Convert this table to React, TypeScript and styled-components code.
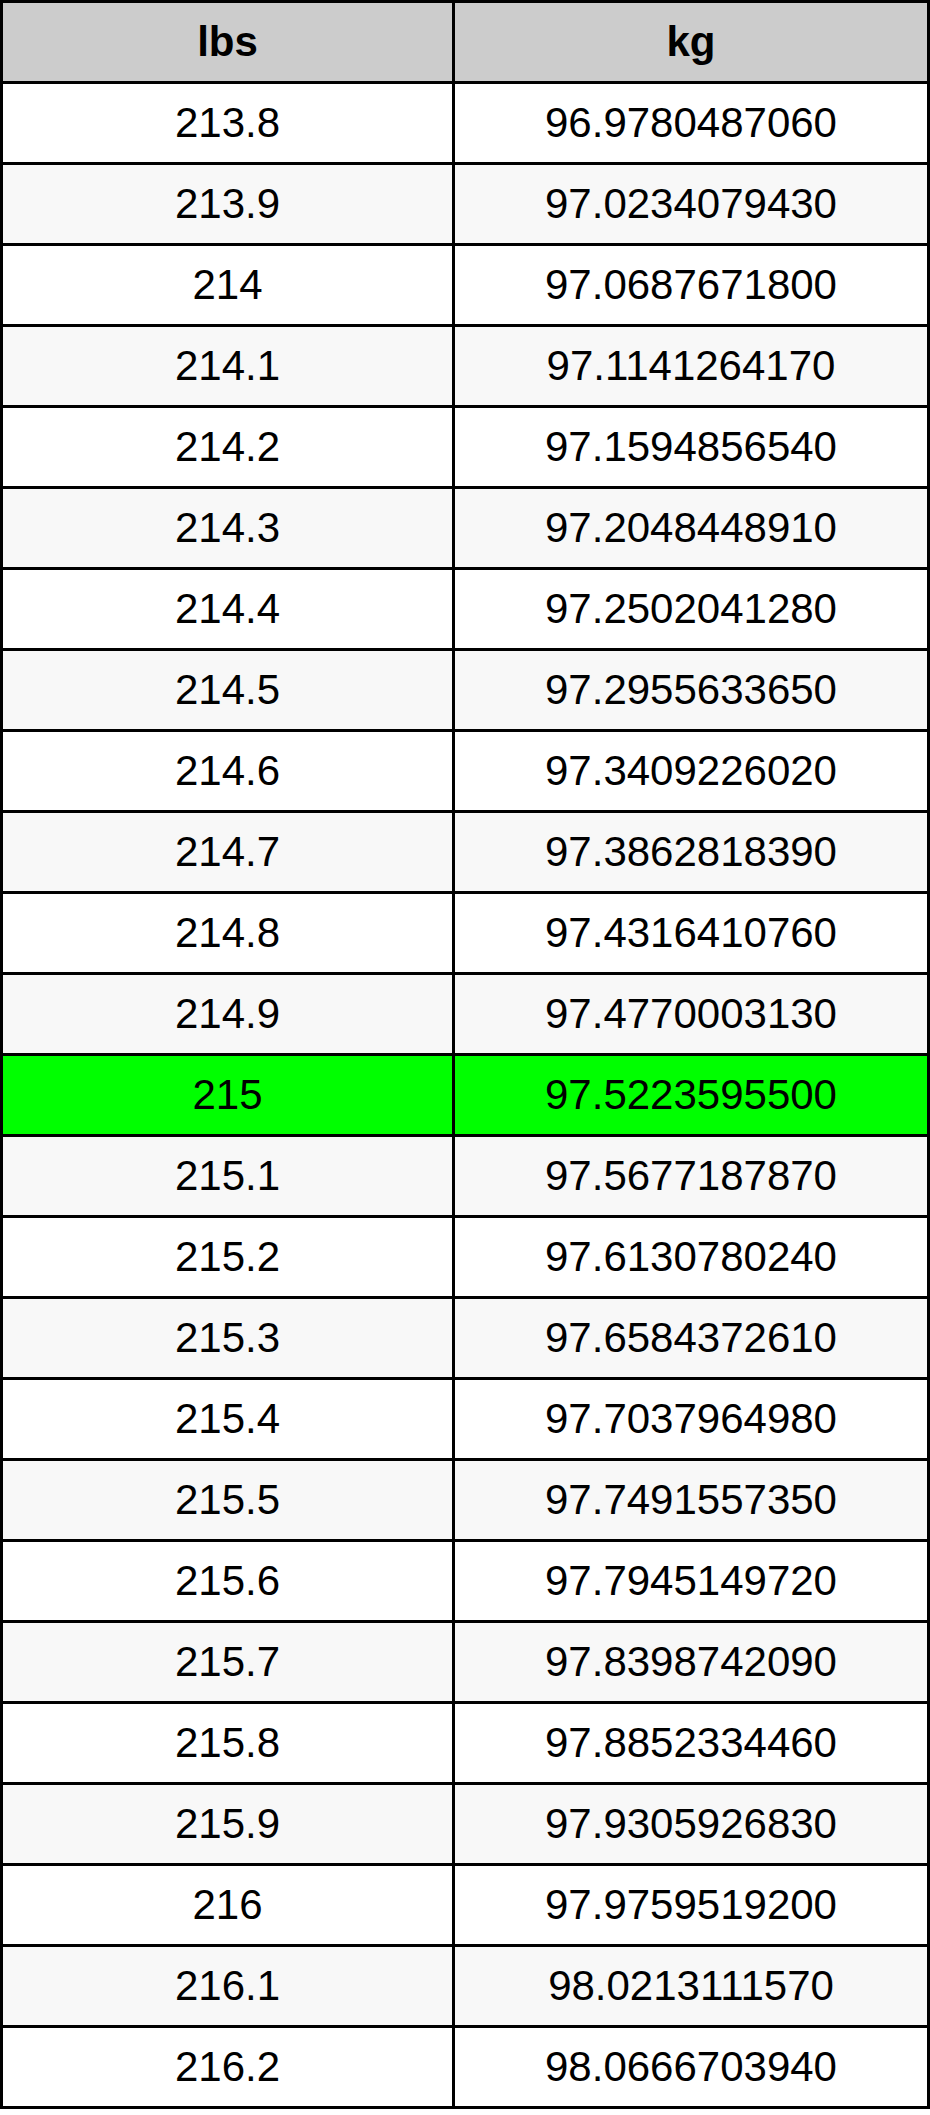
import styled, { createGlobalStyle } from "styled-components";

const GlobalStyle = createGlobalStyle`
  html,
  body {
    margin: 0;
    padding: 0;
    background: #fff;
  }
`;

const ConversionTable = styled.div`
  box-sizing: border-box;
  display: grid;
  grid-template-columns: 449px 472px;
  grid-auto-rows: 78px;
  gap: 3px;
  width: 930px;
  padding: 3px;
  background: #000;

  font-family: "Liberation Sans", Arial, sans-serif;
  font-size: 42px;
  color: #000;
`;

const HeaderCell = styled.div`
  display: flex;
  align-items: center;
  justify-content: center;
  background: #cccccc;
  font-weight: bold;
`;

type Tone = "plain" | "striped" | "active";

const toneColors: Record<Tone, string> = {
  plain: "#ffffff",
  striped: "#f8f8f8",
  active: "#00ff00",
};

const Cell = styled.div<{ $tone: Tone }>`
  display: flex;
  align-items: center;
  justify-content: center;
  background: ${({ $tone }) => toneColors[$tone]};
`;

const rows: [string, string][] = [
  ["213.8", "96.9780487060"],
  ["213.9", "97.0234079430"],
  ["214", "97.0687671800"],
  ["214.1", "97.1141264170"],
  ["214.2", "97.1594856540"],
  ["214.3", "97.2048448910"],
  ["214.4", "97.2502041280"],
  ["214.5", "97.2955633650"],
  ["214.6", "97.3409226020"],
  ["214.7", "97.3862818390"],
  ["214.8", "97.4316410760"],
  ["214.9", "97.4770003130"],
  ["215", "97.5223595500"],
  ["215.1", "97.5677187870"],
  ["215.2", "97.6130780240"],
  ["215.3", "97.6584372610"],
  ["215.4", "97.7037964980"],
  ["215.5", "97.7491557350"],
  ["215.6", "97.7945149720"],
  ["215.7", "97.8398742090"],
  ["215.8", "97.8852334460"],
  ["215.9", "97.9305926830"],
  ["216", "97.9759519200"],
  ["216.1", "98.0213111570"],
  ["216.2", "98.0666703940"],
];

const highlighted = "215";

const App: React.FC = () => {
  return (
    <>
      <GlobalStyle />
      <ConversionTable>
        <HeaderCell>lbs</HeaderCell>
        <HeaderCell>kg</HeaderCell>
        {rows.map(([lbs, kg], index) => {
          const tone: Tone =
            lbs === highlighted ? "active" : index % 2 ? "striped" : "plain";
          return [
            <Cell key={`${lbs}-lbs`} $tone={tone}>
              {lbs}
            </Cell>,
            <Cell key={`${lbs}-kg`} $tone={tone}>
              {kg}
            </Cell>,
          ];
        })}
      </ConversionTable>
    </>
  );
};

export default App;
